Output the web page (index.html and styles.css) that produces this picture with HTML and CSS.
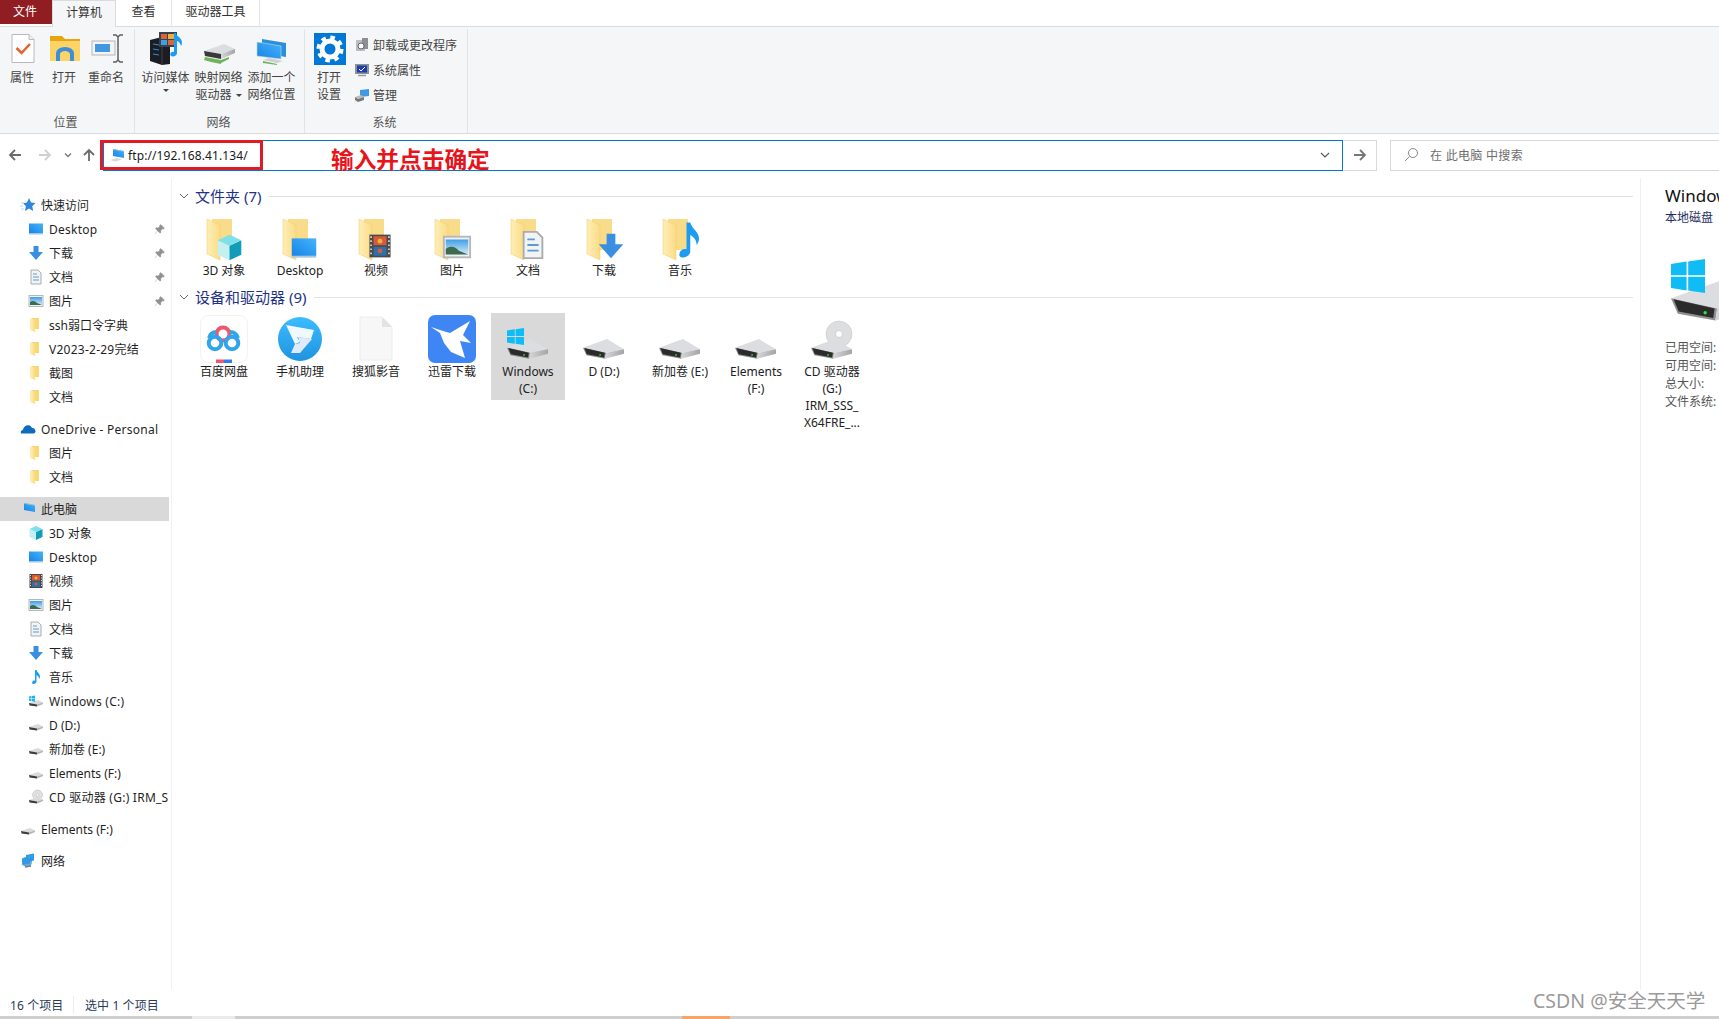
FILE: index.html
```html
<!DOCTYPE html>
<html lang="zh-CN">
<head>
<meta charset="utf-8">
<title>此电脑</title>
<link rel="stylesheet" href="styles.css">
</head>
<body>

<!-- icon sheet -->
<svg class="sheet" xmlns="http://www.w3.org/2000/svg">
  <defs>
    <linearGradient id="g-blue" x1="0" y1="1" x2="1" y2="0"><stop offset="0" stop-color="#1583e6"/><stop offset="1" stop-color="#45b4fb"/></linearGradient>
    <linearGradient id="g-sky" x1="0" y1="0" x2="0" y2="1"><stop offset="0" stop-color="#3f9fe6"/><stop offset="1" stop-color="#d5ecf8"/></linearGradient>
    <linearGradient id="g-folder" x1="0" y1="0" x2="1" y2="0"><stop offset="0" stop-color="#ffeeb6"/><stop offset="1" stop-color="#fbdc86"/></linearGradient>
    <linearGradient id="g-side" x1="0" y1="0" x2="1" y2="0"><stop offset="0" stop-color="#d6d6d8"/><stop offset="1" stop-color="#a4a4a7"/></linearGradient>
    <linearGradient id="g-helper" x1="0" y1="0" x2="0" y2="1"><stop offset="0" stop-color="#3cbcff"/><stop offset="1" stop-color="#1f93e0"/></linearGradient>
  </defs>

  <symbol id="s-desk" viewBox="0 0 16 16"><rect x="1" y="2.5" width="14" height="10" fill="url(#g-blue)"/><rect x="1" y="12.5" width="14" height="1" fill="#a9c6dd"/></symbol>
  <symbol id="s-down" viewBox="0 0 16 16"><path d="M5.500 1h5v6H15l-7 8-7-8h4.500z" fill="#3b8fe2"/></symbol>
  <symbol id="s-doc" viewBox="0 0 16 16"><path d="M3 1h7l3 3v11H3z" fill="#f2f3f5" stroke="#a9acb0"/><path d="M5 5h4M5 8h6M5 11h6" stroke="#5c9bd1"/></symbol>
  <symbol id="s-pic" viewBox="0 0 16 16"><rect x="1" y="2.500" width="14" height="11" fill="#f0f1f3" stroke="#b5b7ba"/><rect x="2" y="4" width="12" height="8" fill="url(#g-sky)"/><path d="M2 12V9c3-2 5-1 7 1l5 2z" fill="#3d6b4e"/></symbol>
  <symbol id="s-folder" viewBox="0 0 16 16"><path d="M4 1h7v11H4z" fill="#f8d777"/><path d="M2 1l5 2v12l-5-2z" fill="url(#g-folder)"/></symbol>
  <symbol id="s-cube" viewBox="0 0 16 16"><path d="M1.500 4L8 7v8l-6.500-3z" fill="#c4f0f2"/><path d="M8 7l6.500-3v8L8 15z" fill="#129cb8"/><path d="M8 1l6.500 3L8 7 1.500 4z" fill="#7ee0e8"/></symbol>
  <symbol id="s-video" viewBox="0 0 16 16"><rect x="1.500" y="1" width="13" height="14" fill="#4a4a4a"/><rect x="4" y="2" width="8" height="5.500" fill="#d85a3a"/><rect x="4" y="8.500" width="8" height="5.500" fill="#2d6fa8"/><path d="M2.500 2v12M13.500 2v12" stroke="#ddd" stroke-dasharray="1 1.500"/><circle cx="8" cy="5" r="1.500" fill="#e9b23c"/><circle cx="8" cy="11" r="1.500" fill="#d85a3a"/></symbol>
  <symbol id="s-music" viewBox="0 0 16 16"><path d="M7 1h1.500c.5 2.500 3.500 3.500 3.500 6.500 0 1-.5 2-1 2.500.2-2-1.500-3.500-2.500-4v6.500c0 1.500-1.500 2.500-3 2.500S4 14 4.300 13c.4-1.200 1.700-1.700 2.700-1.300z" fill="#1d9bf0"/></symbol>
  <symbol id="s-pc" viewBox="0 0 16 16"><path d="M4 2l11 2v7L4 9z" fill="url(#g-blue)"/><path d="M4 2l11 2v.8L4 2.800z" fill="#99c4d8"/><path d="M1 13l7-2 5 1.500-7 2z" fill="#d6d7d9"/></symbol>
  <symbol id="s-drive" viewBox="0 0 16 16"><path d="M1 10l9-3 5 2.500-6 2z" fill="#d9dadc"/><path d="M1 10l8 1.500v2L1.500 12.500z" fill="#3c3c3c"/><path d="M9 11.500l6-2v1.500l-6 2.500z" fill="#b2b2b5"/></symbol>
  <symbol id="s-windrive" viewBox="0 0 16 16"><use href="#s-drive" width="16" height="16"/><path d="M1 3.500l2.500-.4v2.300H1zM4 3l3-.5v2.900H4zM1 5.900h2.500v2.300L1 7.800zM4 5.900h3v2.800l-3-.4z" fill="#18b4f2"/></symbol>
  <symbol id="s-cd" viewBox="0 0 16 16"><circle cx="9.500" cy="6" r="5" fill="#dfe0e2" stroke="#b5b6b8" stroke-width=".5"/><circle cx="9.500" cy="6" r="1.400" fill="#fff" stroke="#aaa" stroke-width=".5"/><use href="#s-drive" y="1" width="16" height="16"/></symbol>
  <symbol id="s-net" viewBox="0 0 16 16"><path d="M6 2l8-1.500v7L6 9z" fill="#2f9be6"/><path d="M2 5l8-1.500v7L2 12z" fill="#4cb4f2"/><circle cx="7" cy="9" r="5" fill="#2f8fd8" opacity=".75"/><path d="M5 14l6-1" stroke="#7a7a7a" stroke-width="1.500"/></symbol>
  <symbol id="s-cloud" viewBox="0 0 16 16"><path d="M1 12.500c-.8-2 .5-3.500 2-3.700C3.500 6 6 4 8.500 4.300c1.800.2 3 1.300 3.500 2.700 2-.2 3.700 1.500 3.500 3.500-.1 1.200-1 2-2 2z" fill="#0f6cbd"/></symbol>
  <symbol id="s-star" viewBox="0 0 16 16"><path d="M9 1l2 4.500 4.500.5-3.300 3.200 1 4.800L9 11.500 5 14l.9-4.800L3 6.200l4-.6z" fill="#2f86dc"/><path d="M1 6h3M0 9h3M1 12h3" stroke="#bcd8f0"/></symbol>
  <symbol id="s-pin" viewBox="0 0 16 16"><path d="M9 2l5 5-1.500 1-1-.5-2.500 2.500.3 2.500-1.300 1-6-6 1-1.300 2.500.3L8 4l-.5-1zM5 10l-3.500 4.500" fill="#8f9194" stroke="#8f9194" stroke-width=".6"/></symbol>

  <symbol id="folder" viewBox="0 0 48 48"><path d="M12 5h20v31H12z" fill="#f9dc8a"/><path d="M7 5l13 6v35L7 40z" fill="url(#g-folder)" stroke="#eccb73" stroke-width=".5"/></symbol>
  <symbol id="drive" viewBox="0 0 48 24"><path d="M0 11L28 1l20 12-21 4z" fill="#dcdde0"/><path d="M0 11l27 6-1 7-22-4z" fill="#8f8f91"/><path d="M1.500 11.500L25.500 17l-.8 5.500L4.500 18.800z" fill="#2b2b2b"/><path d="M27 17l21-4v5l-22 6z" fill="url(#g-side)"/><circle cx="20" cy="19.500" r="1" fill="#2fe04a"/></symbol>
  <symbol id="winlogo" viewBox="0 0 17 17"><path d="M0 2.500L7.800 1.300v6.800H0zM8.600 1.200L17 0v8.100H8.600zM0 8.900h7.800v6.800L0 14.500zM8.600 8.900H17V17l-8.400-1.200z" fill="#0fbcf5"/></symbol>

  <symbol id="r-prop" viewBox="0 0 40 40"><path d="M10 5.500h17l5 5v23H10z" fill="#fff" stroke="#b9b9b9"/><path d="M27 5.500v5h5" fill="#eee" stroke="#b9b9b9"/><path d="M14.500 19l5 5 8.500-9" fill="none" stroke="#e8622c" stroke-width="2.500"/></symbol>
  <symbol id="r-open" viewBox="0 0 40 40"><path d="M6 7h12l3 3h15v22H6z" fill="#e9a50f"/><path d="M6 12h30v20H6z" fill="#fcd366"/><path d="M12 32v-8a9 6 0 0 1 18 0v8h-4v-7a5 3 0 0 0-10 0v7z" fill="#3c8fd8"/></symbol>
  <symbol id="r-rename" viewBox="0 0 40 40"><rect x="6" y="12" width="23" height="14" fill="#f4f4f4" stroke="#b5b5b5"/><rect x="9" y="15" width="15" height="8" fill="#3f98e0"/><path d="M32 7v25M27 6h3l2 2 2-2h3M27 33h3l2-2 2 2h3" fill="none" stroke="#5f5f5f" stroke-width="1.500"/></symbol>
  <symbol id="r-media" viewBox="0 0 40 40"><path d="M4 11l12-3 8 3v24l-8 1-12-4z" fill="#1b1d22"/><path d="M16 8v28" stroke="#3f4248"/><path d="M7 15l6 1M7 20l6 1M7 25l6 1" stroke="#2e8fd8"/><rect x="13" y="3" width="18" height="15" fill="#39414d"/><rect x="15" y="5" width="6" height="5" fill="#d8643c"/><rect x="22" y="5" width="6" height="5" fill="#e9b23c"/><rect x="15" y="11" width="6" height="5" fill="#3f9fe6"/><rect x="22" y="11" width="6" height="5" fill="#d8643c"/><path d="M28 4h2c.5 4 6 4 6 10 0 1.500-.5 2.500-1.200 3.200.3-2.500-2-4.500-3.800-5.200v12c0 2-2.200 3.500-4 3.500s-3-1-2.700-2.500c.4-1.600 2.200-2.500 3.700-2z" fill="#1d9bf0"/></symbol>
  <symbol id="r-map" viewBox="0 0 40 40"><path d="M5 22l20-7 11 5-14 5z" fill="#dcdde0"/><path d="M5 22l17 3v5L6 27z" fill="#3a3a3a"/><path d="M22 25l14-5v4l-14 6z" fill="url(#g-side)"/><path d="M6 28l16 3v4L12 33l-7-2zM22 31l8-3v2l-8 4z" fill="#6fb35a"/></symbol>
  <symbol id="r-add" viewBox="0 0 40 40"><path d="M10 10l24 4v14l-24-4z" fill="#2b90dc"/><path d="M5 13l24 4v13L5 27z" fill="url(#g-blue)" stroke="#c9d4da" stroke-width=".6"/><path d="M11 31l14 3 6-2-14-3z" fill="#cfd0d2"/><path d="M11 32l14 3v1l-14-2z" fill="#6fb35a"/></symbol>
  <symbol id="r-gear" viewBox="0 0 32 32"><rect width="32" height="32" fill="#0078d7"/><circle cx="16" cy="16" r="8" fill="none" stroke="#fff" stroke-width="5"/><circle cx="16" cy="16" r="11.500" fill="none" stroke="#fff" stroke-width="4" stroke-dasharray="4.500 4.530"/></symbol>
  <symbol id="r-uninstall" viewBox="0 0 16 16"><rect x="2" y="3" width="9" height="11" fill="#b9bcc0"/><rect x="8" y="1" width="6" height="11" fill="#8d8f92"/><circle cx="7" cy="9" r="3" fill="#fff" stroke="#666"/></symbol>
  <symbol id="r-sys" viewBox="0 0 16 16"><rect x="1" y="2" width="14" height="10" fill="#8e9297"/><rect x="3" y="3.500" width="10" height="7" fill="#1d3fae"/><path d="M5 7l2 2 4-4" stroke="#fff" fill="none"/><path d="M4 13.500h8" stroke="#999" stroke-width="1.500"/></symbol>
  <symbol id="r-manage" viewBox="0 0 16 16"><path d="M6 3l9-1v7l-9 1z" fill="#3f98e0"/><path d="M1 10l6-2 3 2-6 2z" fill="#bbb"/><path d="M1 10l3 2v3l-3-2zM4 12l6-2v3l-6 2z" fill="#777"/></symbol>
</svg>

<div class="tabs">
  <div class="tab tab-file">文件</div>
  <div class="tab tab-active">计算机</div>
  <div class="tab tab-view">查看</div>
  <div class="tab tab-tools">驱动器工具</div>
</div>

<div class="ribbon">
  <div class="group group-place">
    <div class="group-body">
      <div class="rbtn"><svg class="ricon"><use href="#r-prop"/></svg><span>属性</span></div>
      <div class="rbtn"><svg class="ricon"><use href="#r-open"/></svg><span>打开</span></div>
      <div class="rbtn"><svg class="ricon"><use href="#r-rename"/></svg><span>重命名</span></div>
    </div>
    <div class="group-name">位置</div>
  </div>
  <div class="group group-net">
    <div class="group-body">
      <div class="rbtn wide"><svg class="ricon"><use href="#r-media"/></svg><span>访问媒体</span><i class="caret"></i></div>
      <div class="rbtn wide"><svg class="ricon"><use href="#r-map"/></svg><span>映射网络<br>驱动器 <i class="caret inline"></i></span></div>
      <div class="rbtn wide"><svg class="ricon"><use href="#r-add"/></svg><span>添加一个<br>网络位置</span></div>
    </div>
    <div class="group-name">网络</div>
  </div>
  <div class="group group-sys">
    <div class="group-body">
      <div class="rbtn"><svg class="ricon"><use href="#r-gear" x="5" y="4" width="32" height="32"/></svg><span>打开<br>设置</span></div>
      <div class="rlist">
        <div class="ritem"><svg class="sm"><use href="#r-uninstall"/></svg>卸载或更改程序</div>
        <div class="ritem"><svg class="sm"><use href="#r-sys"/></svg>系统属性</div>
        <div class="ritem"><svg class="sm"><use href="#r-manage"/></svg>管理</div>
      </div>
    </div>
    <div class="group-name">系统</div>
  </div>
</div>

<div class="addressrow">
  <div class="navbtns">
    <svg class="navbtn" viewBox="0 0 16 16"><path d="M14 8H3M8 3L3 8l5 5" fill="none" stroke="#6b6b6b" stroke-width="1.800"/></svg>
    <svg class="navbtn" viewBox="0 0 16 16"><path d="M2 8h11M8 3l5 5-5 5" fill="none" stroke="#d0d0d0" stroke-width="1.800"/></svg>
    <svg class="navbtn small" viewBox="0 0 10 10"><path d="M2 3.500l3 3 3-3" fill="none" stroke="#777" stroke-width="1.300"/></svg>
    <svg class="navbtn" viewBox="0 0 16 16"><path d="M8 14V3M3 8l5-5 5 5" fill="none" stroke="#6b6b6b" stroke-width="1.800"/></svg>
  </div>
  <div class="address">
    <svg class="sm addr-icon"><use href="#s-pc"/></svg>
    <span class="addr-text">ftp://192.168.41.134/</span>
    <svg class="addr-chevron" viewBox="0 0 10 10"><path d="M1 3l4 4 4-4" fill="none" stroke="#555" stroke-width="1.100"/></svg>
    <div class="redbox"></div>
    <div class="note">输入并点击确定</div>
  </div>
  <div class="gobtn"><svg class="navbtn" viewBox="0 0 16 16"><path d="M2 8h11M8 3l5 5-5 5" fill="none" stroke="#777" stroke-width="1.800"/></svg></div>
  <div class="search">
    <svg class="search-icon" viewBox="0 0 16 16"><circle cx="10" cy="6" r="4.500" fill="none" stroke="#888"/><path d="M6.500 9.500L2 14" stroke="#888"/></svg>
    <span>在 此电脑 中搜索</span>
  </div>
</div>

<div class="content">
  <nav class="tree">
    <div class="row root"><svg class="sm"><use href="#s-star"/></svg>快速访问</div>
    <div class="row wider"><svg class="sm"><use href="#s-desk"/></svg>Desktop<svg class="pin"><use href="#s-pin"/></svg></div>
    <div class="row"><svg class="sm"><use href="#s-down"/></svg>下载<svg class="pin"><use href="#s-pin"/></svg></div>
    <div class="row"><svg class="sm"><use href="#s-doc"/></svg>文档<svg class="pin"><use href="#s-pin"/></svg></div>
    <div class="row"><svg class="sm"><use href="#s-pic"/></svg>图片<svg class="pin"><use href="#s-pin"/></svg></div>
    <div class="row"><svg class="sm"><use href="#s-folder"/></svg>ssh弱口令字典</div>
    <div class="row wider"><svg class="sm"><use href="#s-folder"/></svg>V2023-2-29完结</div>
    <div class="row"><svg class="sm"><use href="#s-folder"/></svg>截图</div>
    <div class="row"><svg class="sm"><use href="#s-folder"/></svg>文档</div>

    <div class="row root gap wider"><svg class="sm"><use href="#s-cloud"/></svg>OneDrive - Personal</div>
    <div class="row"><svg class="sm"><use href="#s-folder"/></svg>图片</div>
    <div class="row"><svg class="sm"><use href="#s-folder"/></svg>文档</div>

    <div class="row root gap selected"><svg class="sm"><use href="#s-pc"/></svg>此电脑</div>
    <div class="row"><svg class="sm"><use href="#s-cube"/></svg>3D 对象</div>
    <div class="row wider"><svg class="sm"><use href="#s-desk"/></svg>Desktop</div>
    <div class="row"><svg class="sm"><use href="#s-video"/></svg>视频</div>
    <div class="row"><svg class="sm"><use href="#s-pic"/></svg>图片</div>
    <div class="row"><svg class="sm"><use href="#s-doc"/></svg>文档</div>
    <div class="row"><svg class="sm"><use href="#s-down"/></svg>下载</div>
    <div class="row"><svg class="sm"><use href="#s-music"/></svg>音乐</div>
    <div class="row wider"><svg class="sm"><use href="#s-windrive"/></svg>Windows (C:)</div>
    <div class="row"><svg class="sm"><use href="#s-drive"/></svg>D (D:)</div>
    <div class="row"><svg class="sm"><use href="#s-drive"/></svg>新加卷 (E:)</div>
    <div class="row"><svg class="sm"><use href="#s-drive"/></svg>Elements (F:)</div>
    <div class="row wider"><svg class="sm"><use href="#s-cd"/></svg>CD 驱动器 (G:) IRM_S</div>

    <div class="row root gap"><svg class="sm"><use href="#s-drive"/></svg>Elements (F:)</div>
    <div class="row root gap"><svg class="sm"><use href="#s-net"/></svg>网络</div>
  </nav>

  <main class="files">
    <div class="grouphead">
      <svg class="chev" viewBox="0 0 10 10"><path d="M1 3l4 4 4-4" fill="none" stroke="#666"/></svg>
      <span>文件夹 (7)</span><i class="rule"></i>
    </div>
    <div class="tiles">
      <div class="tile"><svg class="bigicon"><use href="#folder"/><use href="#s-cube" x="15" y="19" width="29" height="29"/></svg><span>3D 对象</span></div>
      <div class="tile"><svg class="bigicon"><use href="#folder"/><use href="#s-desk" x="14" y="20" width="28" height="28"/></svg><span>Desktop</span></div>
      <div class="tile"><svg class="bigicon"><use href="#folder"/><use href="#s-video" x="15" y="19" width="26" height="26"/></svg><span>视频</span></div>
      <div class="tile"><svg class="bigicon"><use href="#folder"/><use href="#s-pic" x="14" y="18" width="30" height="30"/></svg><span>图片</span></div>
      <div class="tile"><svg class="bigicon"><use href="#folder"/><use href="#s-doc" x="14" y="16" width="30" height="30"/></svg><span>文档</span></div>
      <div class="tile"><svg class="bigicon"><use href="#folder"/><use href="#s-down" x="17" y="18" width="28" height="28"/></svg><span>下载</span></div>
      <div class="tile"><svg class="bigicon"><use href="#folder"/><use href="#s-music" x="13" y="6" width="40" height="40"/></svg><span>音乐</span></div>
    </div>

    <div class="grouphead">
      <svg class="chev" viewBox="0 0 10 10"><path d="M1 3l4 4 4-4" fill="none" stroke="#666"/></svg>
      <span>设备和驱动器 (9)</span><i class="rule"></i>
    </div>
    <div class="tiles">
      <div class="tile">
        <svg class="bigicon" viewBox="0 0 48 48">
          <rect x=".5" y=".5" width="47" height="47" rx="8" fill="#fff" stroke="#f2f2f2"/>
          <circle cx="23" cy="19" r="6.500" fill="none" stroke="#f0566e" stroke-width="4"/>
          <path d="M16 17a8 8 0 0 0-7 6" fill="none" stroke="#2fa5ea" stroke-width="4"/>
          <path d="M30 17a8 8 0 0 1 8 6" fill="none" stroke="#2fa5ea" stroke-width="4"/>
          <circle cx="15" cy="28" r="6.300" fill="none" stroke="#2fa5ea" stroke-width="4"/>
          <circle cx="32" cy="28" r="6.300" fill="none" stroke="#2fa5ea" stroke-width="4"/>
          <path d="M16 48v-3.500h8V48z" fill="#f0566e"/><path d="M24 48v-3.500h8V48z" fill="#2f7fea"/>
        </svg>
        <span>百度网盘</span>
      </div>
      <div class="tile">
        <svg class="bigicon" viewBox="0 0 48 48">
          <circle cx="24" cy="24" r="22" fill="url(#g-helper)"/>
          <path d="M10 10l28 5-3 9-14-2 3 5-5 2z" fill="#fff" opacity=".92"/>
          <path d="M36 24L24 38h-9l4-9 5-1-2-6z" fill="#dfeafa"/>
        </svg>
        <span>手机助理</span>
      </div>
      <div class="tile">
        <svg class="bigicon" viewBox="0 0 48 48">
          <path d="M8 2h22l10 10v33H8z" fill="#f7f7f8" stroke="#ececec"/>
          <path d="M30 2v10h10z" fill="#e2e3e5"/>
        </svg>
        <span>搜狐影音</span>
      </div>
      <div class="tile">
        <svg class="bigicon" viewBox="0 0 48 48">
          <rect width="48" height="48" rx="7" fill="#3f86f5"/>
          <path d="M3 12l12 4 7 2L42 6l-7 14 8 8-11-2 5 17-14-6-7-9-4-10z" fill="#fff"/>
        </svg>
        <span>迅雷下载</span>
      </div>
      <div class="tile selected">
        <svg class="bigicon" viewBox="0 0 48 48">
          <use href="#drive" x="3" y="23" width="41" height="21"/>
          <use href="#winlogo" x="3" y="13" width="17" height="17"/>
        </svg>
        <span>Windows<br>(C:)</span>
      </div>
      <div class="tile"><svg class="bigicon" viewBox="0 0 48 48"><use href="#drive" x="3" y="23" width="41" height="21"/></svg><span>D (D:)</span></div>
      <div class="tile"><svg class="bigicon" viewBox="0 0 48 48"><use href="#drive" x="3" y="23" width="41" height="21"/></svg><span>新加卷 (E:)</span></div>
      <div class="tile"><svg class="bigicon" viewBox="0 0 48 48"><use href="#drive" x="3" y="23" width="41" height="21"/></svg><span>Elements<br>(F:)</span></div>
      <div class="tile">
        <svg class="bigicon" viewBox="0 0 48 48">
          <circle cx="31" cy="19" r="13" fill="#dcdedf" stroke="#c4c5c7" stroke-width=".5"/>
          <circle cx="31" cy="19" r="3.500" fill="#fff" stroke="#b0b1b3" stroke-width=".5"/>
          <use href="#drive" x="3" y="23" width="41" height="21"/>
        </svg>
        <span>CD 驱动器<br>(G:)<br>IRM_SSS_<br>X64FRE_...</span>
      </div>
    </div>
  </main>

  <aside class="preview">
    <h2>Windows (C:)</h2>
    <p class="kind">本地磁盘</p>
    <svg class="preview-icon" viewBox="0 0 48 48">
      <use href="#drive" x="3" y="23" width="41" height="21"/>
      <use href="#winlogo" x="3" y="13" width="17" height="17"/>
    </svg>
    <ul class="facts">
      <li>已用空间:</li>
      <li>可用空间:</li>
      <li>总大小:</li>
      <li>文件系统:</li>
    </ul>
  </aside>
</div>

<div class="status">
  <span class="count">16 个项目</span>
  <span class="picked">选中 1 个项目</span>
</div>
<div class="taskstrip"><i class="strip-light"></i><i class="strip-orange"></i></div>
<div class="watermark">CSDN @安全天天学</div>

</body>
</html>
```

FILE: styles.css
```css
*{
	box-sizing: border-box;
	margin: 0;
	padding: 0;
}

body{
	position: relative;
	display: flex;
	flex-direction: column;
	width: 1719px;
	height: 1019px;
	overflow: hidden;
	background: #fff;
	font-family: "Noto Sans", "Noto Sans CJK SC", sans-serif;
	font-size: 12px;
	color: #1f1f1f;
}

.sheet{
	position: absolute;
	width: 0;
	height: 0;
}

svg{
	flex: none;
	display: block;
}

.sm{
	width: 16px;
	height: 16px;
}

/* tabs */
.tabs{
	display: flex;
	height: 27px;
	border-bottom: 1px solid #dadbdc;
}
.tab{
	height: 27px;
	line-height: 24px;
	text-align: center;
	color: #333;
	border-right: 1px solid #e6e6e6;
}
.tab-file{
	width: 52px;
	height: 24px;
	padding-right: 2px;
	background: #8f1d22;
	color: #fff;
	border: 0;
}
.tab-active{
	width: 64px;
	background: #f5f6f7;
	border: 1px solid #dadbdc;
	border-bottom: 0;
}
.tab-view{ width: 56px; }
.tab-tools{ width: 88px; }

/* ribbon */
.ribbon{
	display: flex;
	height: 107px;
	background: #f5f6f7;
	border-bottom: 1px solid #dadbdc;
}
.group{
	display: flex;
	flex-direction: column;
	margin-top: 2px;
	height: 104px;
	border-right: 1px solid #e2e3e4;
}
.group-place{ width: 135px; padding-left: 1px; }
.group-net{ width: 170px; padding-left: 4px; }
.group-sys{ width: 163px; padding-left: 3px; }
.group-body{
	display: flex;
	flex: 1;
}
.group-name{
	height: 19px;
	padding-right: 6px;
	line-height: 18px;
	text-align: center;
	color: #555;
}
.group-place .group-name{ padding-right: 4px; }
.rbtn{
	position: relative;
	width: 42px;
	line-height: 17px;
	text-align: center;
	color: #444;
}
.rbtn.wide{ width: 53px; }
.ricon{
	width: 40px;
	height: 40px;
	margin: 0 auto;
}
.caret{
	display: block;
	width: 0;
	height: 0;
	margin: 3px auto 0;
	border: 3px solid transparent;
	border-top: 3px solid #444;
	border-bottom: 0;
}
.caret.inline{
	display: inline-block;
	margin: 0 0 2px 1px;
}
.rlist{
	display: flex;
	flex-direction: column;
	gap: 9px;
	margin: 8px 0 0 4px;
}
.ritem{
	display: flex;
	align-items: center;
	gap: 3px;
	height: 16px;
	color: #444;
}

/* address row */
.addressrow{
	display: flex;
	align-items: center;
	height: 37px;
	padding-top: 5px;
}
.navbtns{
	display: flex;
	flex: none;
	align-items: center;
	width: 103px;
}
.navbtn{
	width: 16px;
	height: 16px;
}
.navbtns .navbtn{ margin-left: 8px; }
.navbtns .navbtn:first-child{ margin-left: 7px; }
.navbtns .navbtn:nth-child(2){ margin-left: 14px; }
.navbtns .navbtn.small{
	width: 10px;
	height: 10px;
	margin-left: 10px;
}
.address{
	position: relative;
	display: flex;
	flex: none;
	align-items: center;
	width: 1240px;
	height: 31px;
	padding: 0 12px 0 5px;
	border: 1px solid #0078d7;
}
.addr-icon{ margin-right: 3px; }
.addr-text{
	flex: 1;
	letter-spacing: .1px;
	color: #1a1a1a;
}
.addr-chevron{
	width: 10px;
	height: 10px;
}
.redbox{
	position: absolute;
	left: -4px;
	top: -1px;
	width: 163px;
	height: 30px;
	border: 3px solid #e01b24;
}
.note{
	position: absolute;
	left: 227px;
	top: 4px;
	font-size: 22.7px;
	line-height: 30px;
	font-weight: 700;
	color: #e8141c;
	white-space: nowrap;
}
.gobtn{
	display: flex;
	flex: none;
	align-items: center;
	justify-content: center;
	width: 34px;
	height: 31px;
	border: 1px solid #d9d9d9;
	border-left: 0;
}
.search{
	display: flex;
	flex: 1;
	align-items: center;
	height: 31px;
	margin-left: 13px;
	padding-left: 12px;
	border: 1px solid #d9d9d9;
	border-right: 0;
	letter-spacing: .3px;
	color: #6d6d6d;
}
.search-icon{
	width: 16px;
	height: 16px;
	margin-right: 11px;
}

/* tree, files and preview */
.content{
	display: flex;
	flex: 1;
	min-height: 0;
}
.tree{
	flex: none;
	width: 172px;
	margin-top: 7px;
	padding-top: 15px;
	border-right: 1px solid #f0f0f0;
}
.row{
	display: flex;
	align-items: center;
	gap: 5px;
	width: 169px;
	height: 24px;
	padding-left: 28px;
	white-space: nowrap;
	overflow: hidden;
}
.row.root{ padding-left: 20px; }
.row.gap{ margin-top: 8px; }
.row.wider{ letter-spacing: .25px; }
.row.selected{ background: #d9d9d9; }
.pin{
	width: 12px;
	height: 12px;
	margin-left: auto;
	margin-right: 3px;
}

.files{
	flex: 1;
	padding: 15px 7px 0 1px;
}
.grouphead{
	display: flex;
	align-items: center;
	height: 20px;
	font-size: 15px;
	color: #1e3287;
}
.grouphead span{ margin-top: -2px; }
.chev{
	width: 10px;
	height: 10px;
	margin: 0 6px;
}
.rule{
	flex: 1;
	height: 1px;
	margin-left: 8px;
	background: #e2e2e2;
}
.tiles{
	display: flex;
	align-items: flex-start;
	gap: 2px;
	margin: 6px 0 5px 14px;
}
.tile{
	width: 74px;
	padding: 2px 0 3px;
	line-height: 17px;
	text-align: center;
	color: #222;
}
.tile.selected{ background: #d9d9d9; }
.bigicon{
	width: 48px;
	height: 48px;
	margin: 0 auto;
	overflow: visible;
}

.preview{
	flex: none;
	width: 79px;
	margin-top: 7px;
	padding: 8px 0 0 24px;
	border-left: 1px solid #f0f0f0;
	overflow: hidden;
	white-space: nowrap;
}
.preview h2{
	font-size: 17px;
	font-weight: 400;
	line-height: 20px;
	color: #111;
}
.kind{
	margin-top: 3px;
	line-height: 17px;
	color: #1f2f5f;
}
.preview-icon{
	width: 96px;
	height: 96px;
	margin: 7px 0 10px;
}
.facts{
	list-style: none;
	line-height: 18px;
	color: #555;
}

/* bottom */
.status{
	display: flex;
	align-items: center;
	height: 26px;
	flex: none;
	padding-top: 4px;
	padding-left: 10px;
	letter-spacing: .1px;
	color: #2a3a5a;
}
.count{
	width: 64px;
	margin-right: 11px;
	border-right: 1px solid #eee;
}
.taskstrip{
	position: relative;
	flex: none;
	height: 3px;
	background: #cfcfcf;
}
.strip-light{
	position: absolute;
	left: 192px;
	width: 43px;
	height: 3px;
	background: #ebebeb;
}
.strip-orange{
	position: absolute;
	left: 682px;
	width: 48px;
	height: 3px;
	background: #f5a56a;
}
.watermark{
	position: absolute;
	left: 1533px;
	top: 988px;
	font-size: 19.5px;
	line-height: 26px;
	color: #9a9a9a;
	white-space: nowrap;
}
```
